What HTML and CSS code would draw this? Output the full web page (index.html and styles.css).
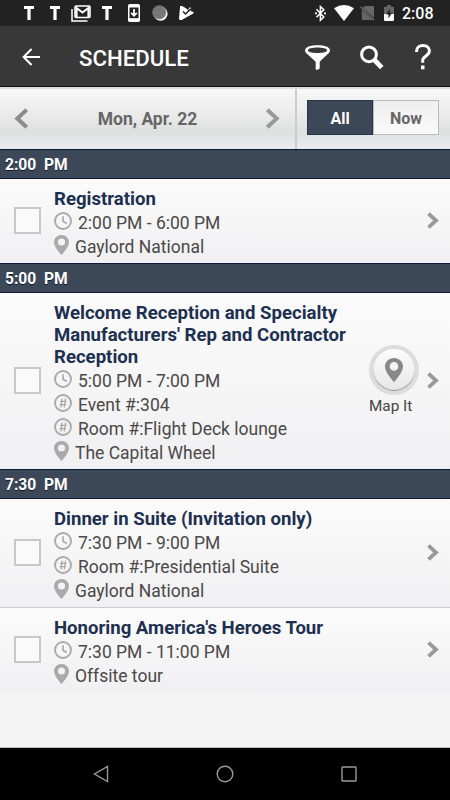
FILE: index.html
```
<!DOCTYPE html>
<html lang="en">
<head>
    <meta charset="utf-8">
    <title>Schedule</title>
    <link rel="stylesheet" href="styles.css">
</head>
<body>
    <svg class="defs" width="0" height="0">
        <symbol id="clock" viewBox="0 0 18 18">
            <circle cx="9" cy="9" r="8" fill="none" stroke="#aaa" stroke-width="1.9"/>
            <path d="M9 4.3V9.3L12.8 11.5" fill="none" stroke="#aaa" stroke-width="1.7"/>
        </symbol>
        <symbol id="hash" viewBox="0 0 18 18">
            <circle cx="9" cy="9" r="8" fill="none" stroke="#aaa" stroke-width="1.9"/>
            <path d="M8.2 4.7L6.9 13.3M11.5 4.7L10.2 13.3M6 7.4H12.5M5.6 10.6H12.1" fill="none" stroke="#aaa" stroke-width="1.3"/>
        </symbol>
        <symbol id="pin" viewBox="0 0 15 20">
            <path fill-rule="evenodd" d="M7.5 0C3.2 0 0 3.2 0 7.2C0 12 7.5 20 7.5 20S15 12 15 7.2C15 3.2 11.8 0 7.5 0ZM7.5 3.4A3.6 3.6 0 1 1 7.5 10.6A3.6 3.6 0 1 1 7.5 3.4Z"/>
        </symbol>
        <symbol id="chevron" viewBox="0 0 12 17">
            <path d="M1.5 1.7L9 8.5L1.5 15.3" fill="none" stroke="#999" stroke-width="3.8"/>
        </symbol>
    </svg>

    <div class="status-bar">
        <div class="notifications">
            <svg width="10" height="14" viewBox="0 0 10 14"><path d="M0 0H10V3H6.6V14H3.4V3H0Z" fill="#fff"/></svg>
            <svg width="10" height="14" viewBox="0 0 10 14"><path d="M0 0H10V3H6.6V14H3.4V3H0Z" fill="#fff"/></svg>
            <svg class="mail" width="20" height="17" viewBox="0 0 20 17"><path d="M1 4V16H16.5" fill="none" stroke="#fff" stroke-width="1.5"/><rect x="4" y="1" width="15" height="11.5" rx="1" fill="none" stroke="#fff" stroke-width="1.6"/><path d="M5.6 12V3L11.5 7.6L17.4 3V12" fill="none" stroke="#fff" stroke-width="2"/></svg>
            <svg width="10" height="14" viewBox="0 0 10 14"><path d="M0 0H10V3H6.6V14H3.4V3H0Z" fill="#fff"/></svg>
            <svg class="phone" width="12" height="18" viewBox="0 0 12 18"><rect width="12" height="18" rx="1.8" fill="#fff"/><path d="M1.5 3.5H10.5V14.2H1.5Z" fill="#222"/><path d="M6 5V11M3.2 8.8L6 11.7L8.8 8.8" fill="none" stroke="#fff" stroke-width="1.7"/></svg>
            <svg class="ball" width="16" height="16" viewBox="0 0 16 16"><circle cx="8.6" cy="8.7" r="7" fill="#fff"/><circle cx="7.3" cy="7.3" r="6.6" fill="#777" stroke="#858585" stroke-width="1.2" stroke-dasharray="1.2 .8"/></svg>
            <svg class="play" width="15" height="14" viewBox="0 0 15 14"><path d="M1.2 0H3L7 2.2L9 4L10.8 1.2L12.2 2L11.5 4.7L14.5 6.2Q15 7 14.3 7.5L2.6 14H0.7L0 12.5L1 1Z" fill="#fff"/><path d="M4 5.5L6.5 8L11.8 2.8" fill="none" stroke="#222" stroke-width="1.5"/></svg>
        </div>
        <div class="system">
            <svg width="11" height="17" viewBox="0 0 11 17"><path d="M1.5 4.3L8.8 12L5.4 15.2V1.5L8.8 4.7L1.5 12.3" fill="none" stroke="#fff" stroke-width="1.5"/><path d="M0 7.5H2V9.2H0ZM9 7.5H11V9.2H9Z" fill="#fff"/></svg>
            <svg class="wifi" width="20" height="16" viewBox="0 0 20 16"><path d="M0 3.2Q10 -3.2 20 3.2L10 16Z" fill="#fff"/></svg>
            <svg class="sim" width="15" height="16" viewBox="0 0 15 16"><path d="M5 1H13Q14 1 14 2V13L3 3ZM1.8 4.6L12.8 15H3Q1.8 15 1.8 14Z" fill="#666"/><path d="M.6 1.7L14 15.2" stroke="#777" stroke-width="1.2"/></svg>
            <svg class="battery" width="10" height="16" viewBox="0 0 10 16"><path d="M3 0H7V1.7H9Q10 1.7 10 2.7V9H0V2.7Q0 1.7 1 1.7H3Z" fill="#666"/><path d="M0 9H10V15Q10 16 9 16H1Q0 16 0 15Z" fill="#fff"/><path d="M5.8 3.5L2.3 9.5H4.5V13.5L8 7.8H5.8Z" fill="#222"/></svg>
            <span class="clock-text">2:08</span>
        </div>
    </div>

    <div class="app-bar">
        <svg class="back" width="19" height="18" viewBox="0 0 19 18"><path d="M18 9H2M9.6 1L1.6 9L9.6 17" fill="none" stroke="#fff" stroke-width="2"/></svg>
        <h1>SCHEDULE</h1>
        <svg class="filter" width="25" height="25" viewBox="0 0 25 25"><path fill-rule="evenodd" d="M0 5.5C0 2.2 5.5 .3 12.5 .3S25 2.2 25 5.5C25 8 22 9.3 14.7 16.8V23.6Q12.5 25.3 10.7 24.6V16.8C3 9.3 0 8 0 5.5ZM3 5.2C3 7 7.2 8 12.5 8S22 7 22 5.2S17.8 2.5 12.5 2.5S3 3.4 3 5.2Z" fill="#fff"/></svg>
        <svg class="search" width="24" height="25" viewBox="0 0 24 25"><circle cx="9" cy="9.3" r="7.4" fill="none" stroke="#fff" stroke-width="3"/><path d="M13.5 14L21.8 22.7" stroke="#fff" stroke-width="4.8"/></svg>
        <svg class="help" width="16" height="26" viewBox="0 0 16 26"><path d="M1.6 8V7C1.6 3.8 4 1.5 8 1.5S14.4 3.8 14.4 7C14.4 11.7 7.7 12.5 7.7 16.2V18.7" fill="none" stroke="#fff" stroke-width="3"/><path d="M6 21.5H9.5V25.3H6Z" fill="#fff"/></svg>
    </div>

    <div class="date-bar">
        <div class="date-picker">
            <svg class="prev" width="15" height="21" viewBox="0 0 15 21"><path d="M12.7 1.8L3.3 10.5L12.7 19.2" fill="none" stroke="#8c8c8c" stroke-width="4"/></svg>
            <span>Mon, Apr. 22</span>
            <svg width="15" height="21" viewBox="0 0 15 21"><path d="M2.3 1.8L11.7 10.5L2.3 19.2" fill="none" stroke="#999" stroke-width="4"/></svg>
        </div>
        <div class="toggle">
            <div class="option active">All</div>
            <div class="option">Now</div>
        </div>
    </div>

    <div class="schedule">
        <h2>2:00&nbsp; PM</h2>
        <div class="event">
            <div class="checkbox"></div>
            <div class="info">
                <h3>Registration</h3>
                <p><svg class="round"><use href="#clock"/></svg>2:00 PM - 6:00 PM</p>
                <p><svg class="pin"><use href="#pin"/></svg>Gaylord National</p>
            </div>
            <svg class="chevron"><use href="#chevron"/></svg>
        </div>

        <h2>5:00&nbsp; PM</h2>
        <div class="event">
            <div class="checkbox"></div>
            <div class="info">
                <h3>Welcome Reception and Specialty<br>Manufacturers' Rep and Contractor<br>Reception</h3>
                <p><svg class="round"><use href="#clock"/></svg>5:00 PM - 7:00 PM</p>
                <p><svg class="round"><use href="#hash"/></svg>Event #:304</p>
                <p><svg class="round"><use href="#hash"/></svg>Room #:Flight Deck lounge</p>
                <p><svg class="pin"><use href="#pin"/></svg>The Capital Wheel</p>
            </div>
            <div class="map-it">
                <div class="map-button"><svg width="18" height="24"><use href="#pin"/></svg></div>
                <span>Map It</span>
            </div>
            <svg class="chevron"><use href="#chevron"/></svg>
        </div>

        <h2>7:30&nbsp; PM</h2>
        <div class="event divided">
            <div class="checkbox"></div>
            <div class="info">
                <h3>Dinner in Suite (Invitation only)</h3>
                <p><svg class="round"><use href="#clock"/></svg>7:30 PM - 9:00 PM</p>
                <p><svg class="round"><use href="#hash"/></svg>Room #:Presidential Suite</p>
                <p><svg class="pin"><use href="#pin"/></svg>Gaylord National</p>
            </div>
            <svg class="chevron"><use href="#chevron"/></svg>
        </div>
        <div class="event">
            <div class="checkbox"></div>
            <div class="info">
                <h3>Honoring America's Heroes Tour</h3>
                <p><svg class="round"><use href="#clock"/></svg>7:30 PM - 11:00 PM</p>
                <p><svg class="pin"><use href="#pin"/></svg>Offsite tour</p>
            </div>
            <svg class="chevron"><use href="#chevron"/></svg>
        </div>
    </div>

    <div class="nav-bar">
        <svg width="16" height="18" viewBox="0 0 16 18"><path d="M14.5 1.5V16.5L1.5 9Z" fill="none" stroke="#999" stroke-width="1.4"/></svg>
        <svg width="18" height="18" viewBox="0 0 18 18"><circle cx="9" cy="9" r="7.8" fill="none" stroke="#999" stroke-width="1.4"/></svg>
        <svg width="16" height="16" viewBox="0 0 16 16"><rect x="1" y="1" width="14" height="14" rx=".5" fill="none" stroke="#999" stroke-width="1.4"/></svg>
    </div>
</body>
</html>
```
FILE: styles.css
```
* { box-sizing: border-box; }
body { margin: 0; width: 450px; height: 800px; overflow: hidden; display: flex; flex-direction: column; font-family: Roboto, sans-serif; background: #f4f4f4; }
h1, h2, h3, p { margin: 0; }
svg { display: block; flex: none; }
.defs { position: absolute; }

/* top bars */
.status-bar { height: 26px; flex: none; background: #222; display: flex; justify-content: space-between; padding: 0 16px 0 24px; }
.notifications, .system { display: flex; align-items: center; }
.notifications { gap: 16px; }
.notifications .mail { margin-left: -5px; margin-right: -5px; }
.notifications .ball { margin-left: -4px; margin-right: -5px; margin-top: -1px; }
.system .wifi { margin-left: 8px; }
.system .sim { margin-left: 6px; }
.system .battery { margin-left: 9px; }
.clock-text { color: #fff; font-size: 16px; line-height: 26px; font-weight: 500; margin-left: 8px; width: 32px; white-space: nowrap; padding-top: 2px; }

.app-bar { height: 61px; flex: none; background: #383838; border-bottom: 1px solid #111; display: flex; align-items: center; padding: 2px 19px 0 22px; }
.app-bar h1 { color: #fff; font-size: 22.2px; font-weight: 500; margin-left: 38px; flex: 1; padding-top: 1px; }
.app-bar .search { margin-left: 30px; }
.app-bar .help { margin-left: 31px; }

.date-bar { height: 62px; flex: none; display: flex; background: linear-gradient(#f7f7f7, #e8e8e9 50%, #dedfdf 70%, #ececef); border-top: 2px solid #ddd; }
.date-picker { width: 297px; border-right: 2px solid #ccc; display: flex; align-items: center; justify-content: space-between; padding: 0 15px 2px 14px; color: #666; font-size: 17.5px; font-weight: 700; }
.date-picker span { padding: 1px 0 0 1px; }
.toggle { display: flex; align-items: center; padding: 0 0 4px 10px; }
.option { width: 66px; height: 35px; border: 1px solid #bbb; background: linear-gradient(#eee, #fafafa); color: #666; font-size: 16px; font-weight: 700; line-height: 35px; text-align: center; }
.option.active { background: #3c4858; color: #fff; border-color: #253647; }

/* event list */
.schedule { flex: 1; border-bottom: 1px solid #bbb; }
.schedule h2 { height: 30px; background: #3c4858; border: solid #101838; border-width: 1px 0; color: #fff; font-size: 15.6px; line-height: 30px; font-weight: 700; padding-left: 5px; text-shadow: 0 1px #10182c; }
.event { display: flex; align-items: center; padding: 8px 11px 5px 14px; background: linear-gradient(#fbfbfb, #f0f0f2); }
.event.divided { height: 109px; border-bottom: 1px solid #ccc; }
.checkbox { width: 27px; height: 27px; flex: none; border: 2px solid #c8c8c8; background: #fafafa; margin-bottom: 5px; }
.info { flex: 1; margin-left: 13px; color: #4c4848; white-space: nowrap; }
.info h3 { color: #1d3050; font-size: 18.58px; line-height: 22px; font-weight: 700; padding-top: 1px; }
.info p { display: flex; font-size: 17.5px; line-height: 26px; height: 24px; }
.round { width: 18px; height: 18px; margin: 2px 6px 0 0; }
.info .pin { width: 15px; height: 20px; margin: 1px 6px 0 0; fill: #aaa; }
.chevron { width: 12px; height: 17px; margin-bottom: 4px; }
.map-it { width: 50px; margin: 0 8px 4px 0; color: #444; font-size: 15.3px; line-height: 22px; white-space: nowrap; }
.map-button { width: 50px; height: 50px; border: 4px solid #dcdcdc; border-radius: 50%; background: linear-gradient(#fdfdfd, #e6e6e6); box-shadow: inset 0 -1px 1px #888; display: flex; align-items: center; justify-content: center; fill: #888; }

.nav-bar { height: 52px; flex: none; background: #000; display: flex; align-items: center; justify-content: center; gap: 107px; }
```
